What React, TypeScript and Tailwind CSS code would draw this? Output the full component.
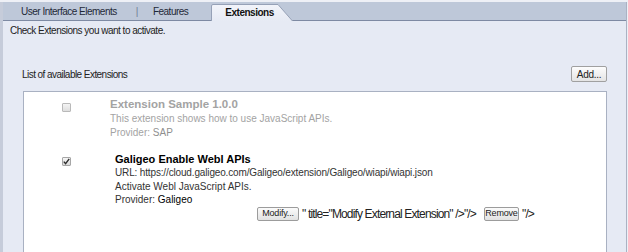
import React from 'react';

const ui = "font-['Liberation_Sans',Arial,sans-serif]";

const Checkbox: React.FC<{ checked?: boolean; disabled?: boolean }> = ({ checked, disabled }) => (
  <div
    className={`flex h-[9px] w-[9px] items-center justify-center rounded-[1px] border ${
      disabled ? 'border-[#b9b9b9] bg-gradient-to-b from-[#f4f4f4] to-[#dedede]' : 'border-[#a6a6a6] bg-gradient-to-b from-[#f6f6f6] to-[#d9d9d9]'
    }`}
  >
    {checked && (
      <svg width="7" height="7" viewBox="0 0 7 7">
        <path d="M0.8 3.6 L2.6 5.6 L6.2 0.9" fill="none" stroke="#2b2b2b" strokeWidth="1.4" />
      </svg>
    )}
  </div>
);

const SmallButton: React.FC<{ label: string; w: string }> = ({ label, w }) => (
  <button
    className={`flex h-[14px] ${w} items-center justify-center rounded-[2px] border border-[#9c9c9c] bg-gradient-to-b from-[#fbfbfb] to-[#e2e2e2] text-[9px] tracking-[-0.2px] text-[#222]`}
  >
    {label}
  </button>
);

export default function App() {
  return (
    <div className={`h-[252px] w-[628px] overflow-hidden bg-[#eef0f6] pt-[2px] ${ui}`}>
      <div className="flex h-[250px] w-[627px] flex-col border-l-[3px] border-r border-l-[#c6ccda] border-r-[#aab2c3] bg-[#e6eaf4]">
        {/* tabs */}
        <div className="flex h-[19px] shrink-0 items-end border-b border-[#7e8aa3] bg-[#bec8d9] text-[10px] tracking-[-0.5px] text-[#1e2838]">
          <div className="flex h-[18px] items-center pl-[18px]">User Interface Elements</div>
          <div className="flex h-[18px] items-center pl-[19px] text-[#6f7c94]">|</div>
          <div className="flex h-[18px] items-center pl-[15px]">Features</div>
          <div className="relative -mb-px ml-[23px] h-[17px] w-[82px]">
            <svg className="absolute inset-0" width="82" height="17" viewBox="0 0 82 17">
              <defs>
                <linearGradient id="tabg" x1="0" y1="0" x2="0" y2="1">
                  <stop offset="0" stopColor="#f2f4fa" />
                  <stop offset="1" stopColor="#e6eaf4" />
                </linearGradient>
              </defs>
              <path d="M0.5 17 V2 Q0.5 0.5 2 0.5 H67 L81.5 17" fill="url(#tabg)" stroke="#96a1b7" />
            </svg>
            <span className="relative flex h-[16px] items-center pl-[14px] font-bold text-[#111]">Extensions</span>
          </div>
        </div>

        <div className="mt-[4px] pl-[7px] text-[10px] leading-[12px] tracking-[-0.5px] text-[#222]">
          Check Extensions you want to activate.
        </div>

        <div className="mt-[29px] flex h-[16px] items-center justify-between pl-[19px] pr-[19px]">
          <span className="text-[10px] tracking-[-0.55px] text-[#222]">List of available Extensions</span>
          <button className="flex h-[16px] w-[36px] items-center justify-center rounded-[2px] border border-[#a0a0a0] bg-gradient-to-b from-[#fdfdfd] to-[#e4e4e4] text-[10px] tracking-[-0.3px] text-[#222]">
            Add...
          </button>
        </div>

        <div className="ml-[20px] mr-[19px] mt-[9px] flex-1 border border-b-0 border-[#a9b1c2] bg-white pt-[5px] text-[10px]">
          {/* disabled sample extension */}
          <div className="flex">
            <div className="w-[86px] shrink-0 pl-[38px] pt-[6px]">
              <Checkbox disabled />
            </div>
            <div className="text-[#a3a3a3]">
              <div className="text-[11.5px] font-bold leading-[15px]">Extension Sample 1.0.0</div>
              <div className="leading-[14px]">This extension shows how to use JavaScript APIs.</div>
              <div className="leading-[14px]">
                Provider: <span className="text-[#8f8f8f]">SAP</span>
              </div>
            </div>
          </div>

          {/* external extension */}
          <div className="mt-[12px] flex">
            <div className="w-[91px] shrink-0 pl-[38px] pt-[5px]">
              <Checkbox checked />
            </div>
            <div className="text-[#333]">
              <div className="text-[11px] font-bold leading-[14px] text-black">Galigeo Enable Webl APIs</div>
              <div className="leading-[13.5px] tracking-[-0.15px]">
                URL: https://cloud.galigeo.com/Galigeo/extension/Galigeo/wiapi/wiapi.json
              </div>
              <div className="leading-[13.5px]">Activate Webl JavaScript APIs.</div>
              <div className="leading-[13.5px]">
                Provider: <span className="text-black">Galigeo</span>
              </div>
              <div className="-mt-[2px] ml-[142px] flex items-center">
                <SmallButton label="Modify..." w="w-[42px]" />
                <span className="ml-[3px] text-[12px] tracking-[-0.85px] text-[#222]">
                  " title="Modify External Extension" /&gt;"/&gt;
                </span>
                <span className="ml-[8px]">
                  <SmallButton label="Remove" w="w-[35px]" />
                </span>
                <span className="ml-[3px] text-[12px] tracking-[-0.85px] text-[#222]">"/&gt;</span>
              </div>
            </div>
          </div>
        </div>
      </div>
    </div>
  );
}
